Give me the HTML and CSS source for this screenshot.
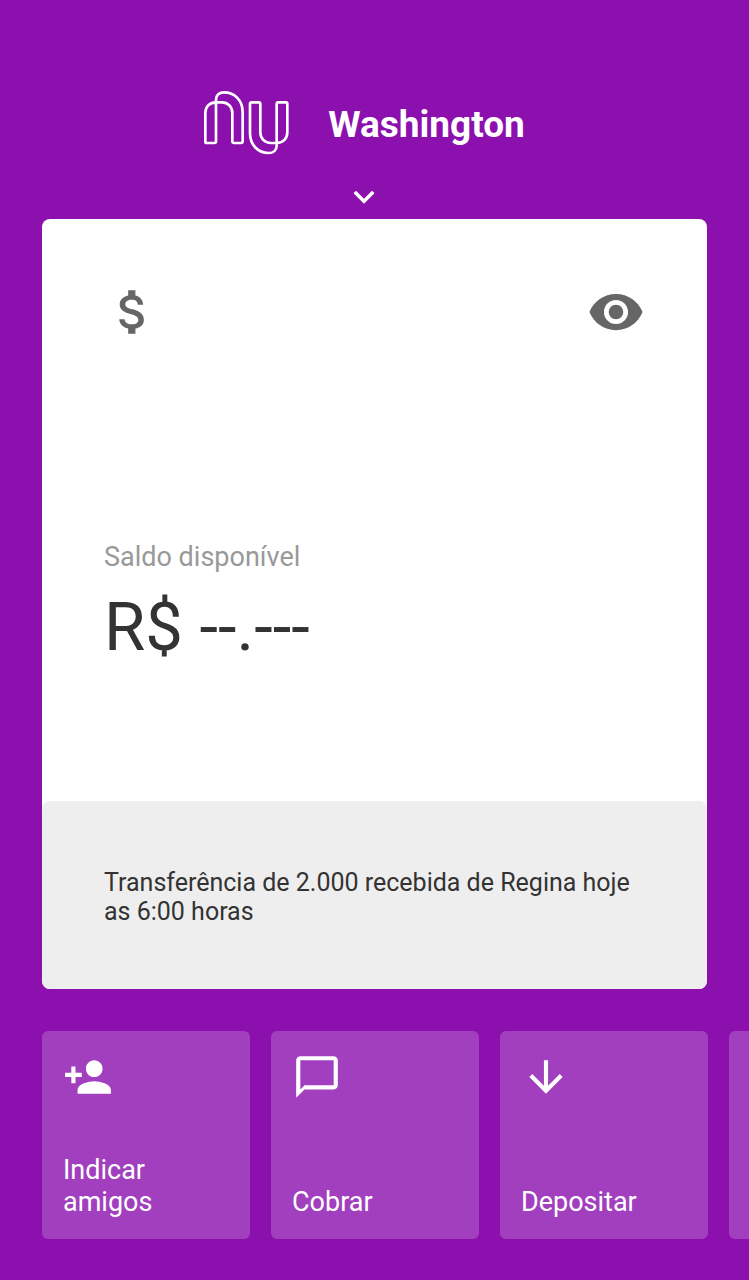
FILE: index.html
```html
<!DOCTYPE html>
<html lang="pt-BR">
<head>
  <meta charset="utf-8">
  <meta name="viewport" content="width=device-width, initial-scale=1">
  <title>Washington</title>
  <link rel="stylesheet" href="styles.css">
</head>
<body>
  <div class="page">
    <header class="header">
      <div class="brand">
        <svg class="brand-logo" viewBox="39 29 258 195" aria-hidden="true">
          <path d="M50 188Q46 188 46 184V98C46 80 58 66 78 66H96C114 66 127 80 127 98V183Q127 188 132 188H153Q158 188 158 183V96C158 60 134 36 102 36C88 36 78 44 78 58V183Q78 188 73 188Z"/>
          <path transform="rotate(180 169 127)" d="M50 188Q46 188 46 184V98C46 80 58 66 78 66H96C114 66 127 80 127 98V183Q127 188 132 188H153Q158 188 158 183V96C158 60 134 36 102 36C88 36 78 44 78 58V183Q78 188 73 188Z"/>
        </svg>
        <h1 class="brand-name">Washington</h1>
      </div>
      <button class="icon-button" type="button">
        <svg class="icon icon-small" viewBox="0 0 24 24"><path d="M7.41 7.84L12 12.42l4.59-4.58L18 9.25l-6 6-6-6z"/></svg>
      </button>
    </header>

    <main class="card">
      <div class="card-header">
        <svg class="icon icon-large" viewBox="0 0 24 24" aria-hidden="true"><path d="M11.8 10.9c-2.27-.59-3-1.2-3-2.15 0-1.09 1.01-1.85 2.7-1.85 1.78 0 2.44.85 2.5 2.1h2.21c-.07-1.72-1.12-3.3-3.21-3.81V3h-3v2.16c-1.94.42-3.5 1.68-3.5 3.61 0 2.31 1.91 3.46 4.7 4.13 2.5.6 3 1.48 3 2.41 0 .69-.49 1.79-2.7 1.79-2.06 0-2.87-.92-2.98-2.1h-2.2c.12 2.19 1.76 3.42 3.68 3.83V21h3v-2.15c1.95-.37 3.5-1.5 3.5-3.55 0-2.84-2.43-3.81-4.7-4.4z"/></svg>
        <button class="icon-button" type="button">
          <svg class="icon icon-large" viewBox="0 0 24 24"><path d="M12 4.5C7 4.5 2.73 7.61 1 12c1.73 4.39 6 7.5 11 7.5s9.27-3.11 11-7.5c-1.73-4.39-6-7.5-11-7.5zM12 17c-2.76 0-5-2.24-5-5s2.24-5 5-5 5 2.24 5 5-2.24 5-5 5zm0-8c-1.66 0-3 1.34-3 3s1.34 3 3 3 3-1.34 3-3-1.34-3-3-3z"/></svg>
        </button>
      </div>
      <div class="card-content">
        <p class="balance-title">Saldo disponível</p>
        <p class="balance-value">R$ --.---</p>
      </div>
      <footer class="card-footer">
        <p class="annotation">Transferência de 2.000 recebida de Regina hoje as 6:00 horas</p>
      </footer>
    </main>

    <nav class="tabs">
      <button class="tab" type="button">
        <svg class="icon" viewBox="0 0 24 24" aria-hidden="true"><path d="M15 12c2.21 0 4-1.79 4-4s-1.79-4-4-4-4 1.79-4 4 1.79 4 4 4zm-9-2V7H4v3H1v2h3v3h2v-3h3v-2H6zm9 4c-2.67 0-8 1.34-8 4v2h16v-2c0-2.66-5.33-4-8-4z"/></svg>
        <span class="tab-label">Indicar amigos</span>
      </button>
      <button class="tab" type="button">
        <svg class="icon" viewBox="0 0 24 24" aria-hidden="true"><path d="M20 2H4c-1.1 0-2 .9-2 2v18l4-4h14c1.1 0 2-.9 2-2V4c0-1.100-.9-2-2-2zm0 14H6l-2 2V4h16v12z"/></svg>
        <span class="tab-label">Cobrar</span>
      </button>
      <button class="tab" type="button">
        <svg class="icon" viewBox="0 0 24 24" aria-hidden="true"><path d="M20 12l-1.410-1.410L13 16.170V4h-2v12.170l-5.580-5.590L4 12l8 8 8-8z"/></svg>
        <span class="tab-label">Depositar</span>
      </button>
      <button class="tab" type="button"></button>
    </nav>
  </div>
</body>
</html>
```

FILE: styles.css
```css
* {
  box-sizing: border-box;
}

body {
  margin: 0;
  background: #8b10ae;
  font-family: Roboto, sans-serif;
}

h1,
p {
  margin: 0;
}

button {
  border: 0;
  padding: 0;
  background: none;
  color: inherit;
  font: inherit;
  cursor: pointer;
}

.page {
  display: flex;
  flex-direction: column;
  min-height: 100vh;
  padding: 84px 0 41px;
}

.header {
  display: flex;
  flex-direction: column;
  align-items: center;
  gap: 16px;
  padding-right: 21px;
  color: #fff;
}

.brand {
  display: flex;
  align-items: center;
  gap: 39px;
}

.brand-logo {
  width: 86px;
  height: 77px;
  fill: none;
  stroke: #fff;
  stroke-width: 8;
}

.brand-name {
  padding-top: 4px;
  font-size: 37px;
  font-weight: 700;
  line-height: 44px;
}

.icon {
  display: block;
  width: 50px;
  height: 50px;
  fill: currentColor;
}

.icon-small {
  width: 42px;
  height: 42px;
}

.icon-large {
  width: 58px;
  height: 58px;
}

.card {
  display: flex;
  flex: 1;
  flex-direction: column;
  margin: 0 42px;
  border-radius: 8px;
  background: #fff;
}

.card-header {
  display: flex;
  align-items: center;
  justify-content: space-between;
  padding: 64px 62px 0;
  color: #666;
}

.card-content {
  display: flex;
  flex: 1;
  flex-direction: column;
  justify-content: center;
  padding: 64px 62px 0;
}

.balance-title {
  color: #999;
  font-size: 27px;
  line-height: 32px;
}

.balance-value {
  margin-top: 15px;
  color: #333;
  font-size: 67px;
  line-height: 78px;
}

.card-footer {
  padding: 67px 62px 63px;
  border-radius: 8px;
  background: #eee;
}

.annotation {
  color: #333;
  font-size: 25px;
  line-height: 29px;
}

.tabs {
  display: flex;
  gap: 21px;
  margin-top: 42px;
  padding-left: 42px;
  overflow-x: auto;
  scrollbar-width: none;
}

.tab {
  display: flex;
  flex: none;
  flex-direction: column;
  justify-content: space-between;
  width: 208px;
  height: 208px;
  padding: 21px;
  border-radius: 6px;
  background: rgba(255, 255, 255, 0.2);
  color: #fff;
  text-align: left;
}

.tab-label {
  width: 120px;
  font-size: 27px;
  line-height: 32px;
}
```
